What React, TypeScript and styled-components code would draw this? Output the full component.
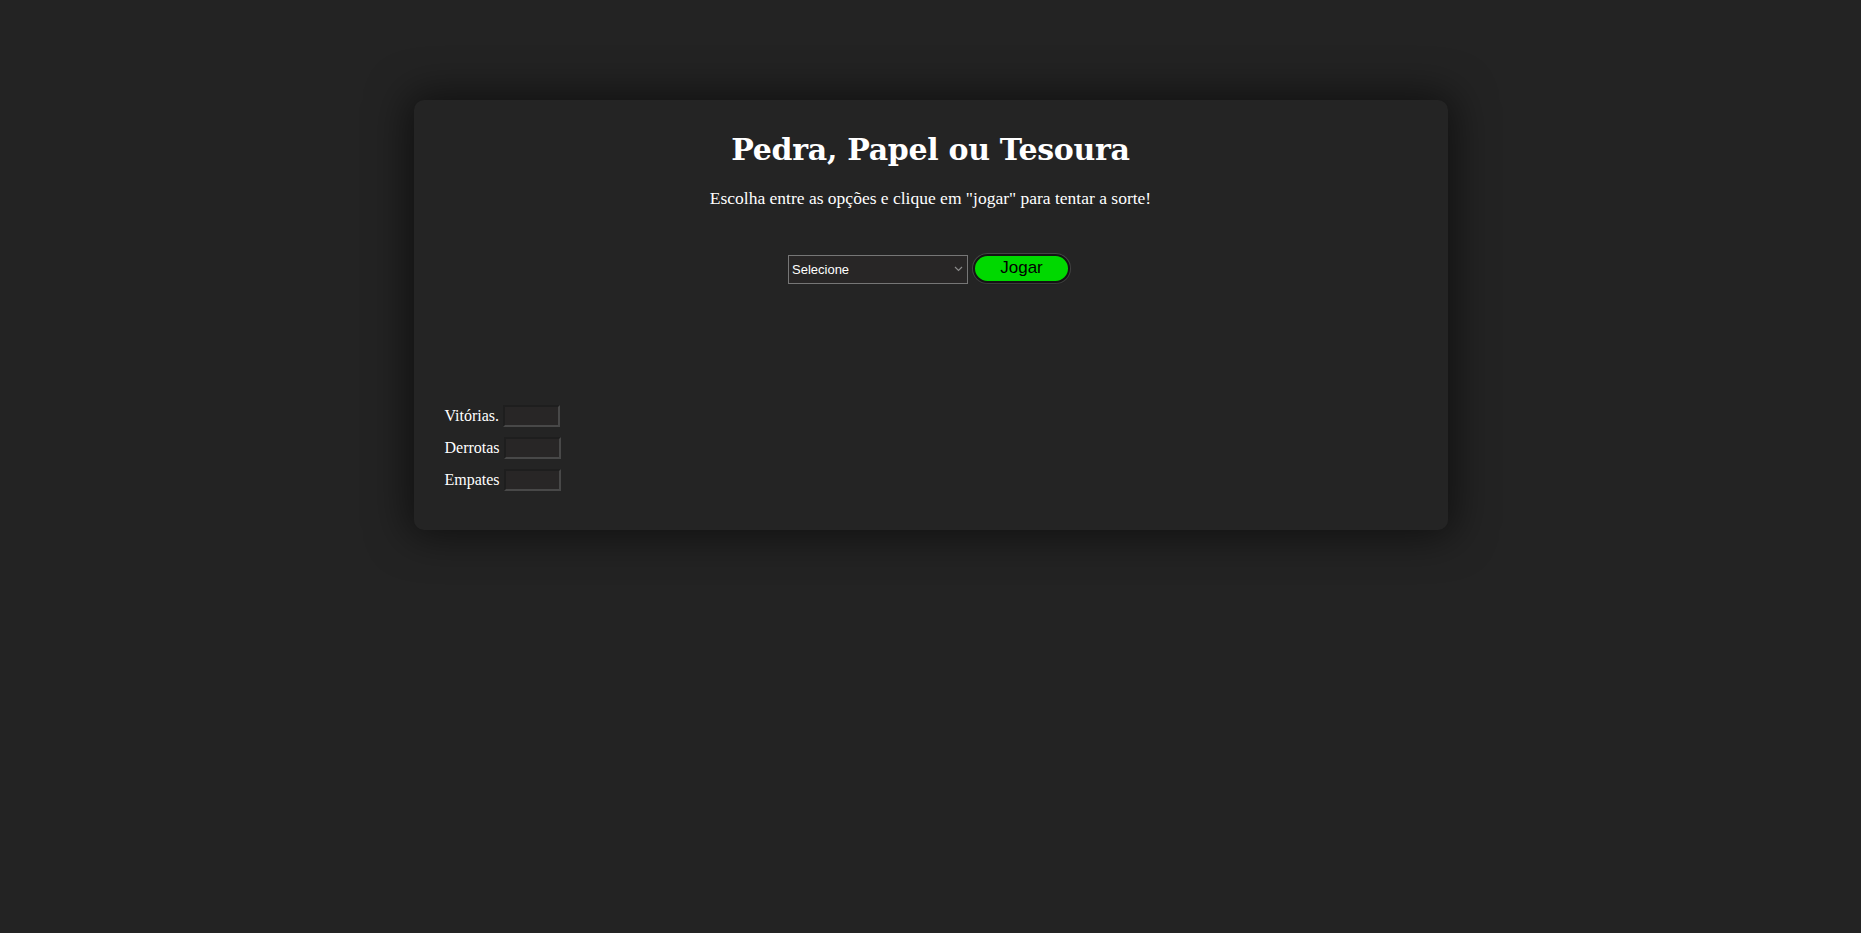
import React from "react";
import styled, { createGlobalStyle } from "styled-components";

const Global = createGlobalStyle`
  html, body {
    margin: 0;
    padding: 0;
    background: #232323;
    color: #ffffff;
    font-family: "Liberation Serif", Georgia, serif;
  }
`;

const Page = styled.main`
  padding-top: 100px;
  min-height: 833px;
`;

const Card = styled.section`
  width: 1034px;
  box-sizing: border-box;
  margin: 0 auto;
  padding: 32px 31px 39px;
  background: #242424;
  border-radius: 10px;
  box-shadow: 0 0 40px 6px rgba(0, 0, 0, 0.55);
`;

const Title = styled.h1`
  margin: 0;
  text-align: center;
  font-family: "DejaVu Serif", Georgia, serif;
  font-weight: bold;
  font-size: 30px;
  line-height: 36px;
  letter-spacing: -0.3px;
  color: #ffffff;
`;

const Subtitle = styled.p`
  margin: 20px 0 0;
  text-align: center;
  font-family: "Liberation Serif", Georgia, serif;
  font-size: 17.5px;
  line-height: 21px;
  color: #ffffff;
`;

const Controls = styled.div`
  margin-top: 45px;
  display: flex;
  justify-content: center;
  align-items: flex-start;
  gap: 5px;
  padding-right: 3px;
`;

const SelectWrap = styled.div`
  position: relative;
  margin-top: 1px;
`;

const Select = styled.select`
  appearance: none;
  width: 180px;
  height: 29px;
  box-sizing: border-box;
  padding: 0 20px 0 3px;
  background: #282626;
  border: 1px solid #767676;
  border-radius: 0;
  color: #ffffff;
  font-family: "Liberation Sans", Arial, sans-serif;
  font-weight: normal;
  font-size: 13px;
  outline: none;
`;

const Chevron = styled.svg`
  position: absolute;
  right: 5px;
  top: 11px;
  width: 9px;
  height: 6px;
  pointer-events: none;
`;

const PlayButton = styled.button`
  width: 97px;
  height: 29px;
  box-sizing: border-box;
  background: #00d900;
  border: 2px solid #141414;
  border-radius: 15px;
  box-shadow: 0 0 0 1px rgba(95, 95, 95, 0.55), 0 1px 1px rgba(0, 0, 0, 0.6);
  color: #000000;
  font-family: "Liberation Sans", Arial, sans-serif;
  font-size: 17px;
  line-height: 1;
  padding: 0 0 2px;
  cursor: pointer;
`;

const Scores = styled.div`
  margin-top: 121px;
  display: flex;
  flex-direction: column;
  gap: 10px;
`;

const ScoreRow = styled.div`
  display: flex;
  align-items: center;
  height: 22px;
  font-family: "Liberation Serif", Georgia, serif;
  font-size: 16px;
  line-height: 22px;
`;

const ScoreLabel = styled.label<{ $gap: number }>`
  color: #ffffff;
  margin-right: ${(p) => p.$gap}px;
`;

const ScoreBox = styled.input`
  width: 57px;
  height: 22px;
  box-sizing: border-box;
  padding: 0 2px;
  background: #282626;
  border-style: solid;
  border-width: 2px;
  border-color: #1e1e1e #484848 #484848 #1e1e1e;
  color: #ffffff;
  font-family: "Liberation Sans", Arial, sans-serif;
  font-size: 13px;
  outline: none;
`;

const scores = [
  { label: "Vitórias.", gap: 4 },
  { label: "Derrotas", gap: 4 },
  { label: "Empates", gap: 4 },
];

export default function App() {
  return (
    <>
      <Global />
      <Page>
        <Card>
          <Title>Pedra, Papel ou Tesoura</Title>
          <Subtitle>
            Escolha entre as opções e clique em "jogar" para tentar a sorte!
          </Subtitle>
          <Controls>
            <SelectWrap>
              <Select defaultValue="">
                <option value="">Selecione</option>
                <option value="pedra">Pedra</option>
                <option value="papel">Papel</option>
                <option value="tesoura">Tesoura</option>
              </Select>
              <Chevron viewBox="0 0 9 6">
                <path d="M1 1 L4.5 4.5 L8 1" fill="none" stroke="#8a8a8a" strokeWidth="1.2" />
              </Chevron>
            </SelectWrap>
            <PlayButton type="button">Jogar</PlayButton>
          </Controls>
          <Scores>
            {scores.map((s) => (
              <ScoreRow key={s.label}>
                <ScoreLabel $gap={s.gap}>{s.label}</ScoreLabel>
                <ScoreBox type="text" readOnly />
              </ScoreRow>
            ))}
          </Scores>
        </Card>
      </Page>
    </>
  );
}
